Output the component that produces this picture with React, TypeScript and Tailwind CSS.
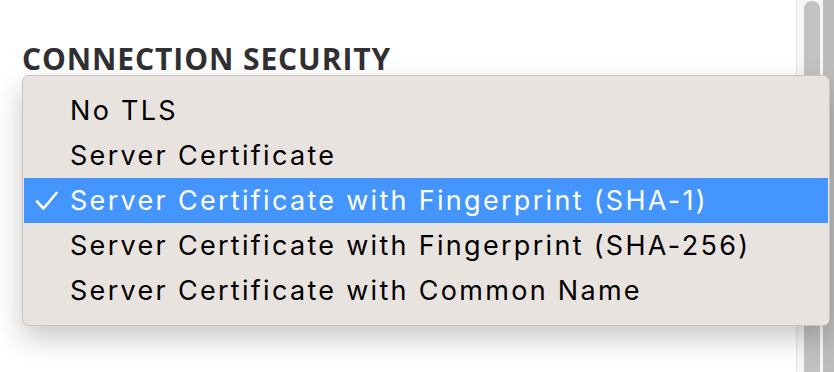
import React from "react";

const items = [
  "No TLS",
  "Server Certificate",
  "Server Certificate with Fingerprint (SHA-1)",
  "Server Certificate with Fingerprint (SHA-256)",
  "Server Certificate with Common Name",
];

export default function App() {
  return (
    <div className="relative flex h-[372px] w-[834px] overflow-hidden bg-white">
      <div className="flex-1 pl-[22px] pt-[39px]">
        <h2
          className="text-[30px] font-bold leading-[40px] tracking-[0.9px] text-[#303033]"
          style={{ fontFamily: '"Open Sans", sans-serif' }}
        >
          CONNECTION SECURITY
        </h2>
      </div>
      <div className="flex h-full w-[38px] border-l border-[#e4e4e4]">
        <div className="flex h-full w-[26px] bg-[#f6f6f6] pl-[7px] pt-[1px]">
          <div className="h-full w-[16px] rounded-t-full bg-[#c2c2c2]" />
        </div>
        <div className="h-full flex-1 bg-[#bcbcbc]" />
      </div>

      <div
        className="absolute left-[22px] top-[75px] w-[808px] rounded-[7px] border border-[#c9c4c1] bg-[#e9e3e0] px-[1px] py-[12px] shadow-[0_12px_28px_rgba(0,0,0,0.22)]"
        style={{ fontFamily: 'Inter, "Liberation Sans", Arial, sans-serif' }}
      >
        {items.map((t, i) => {
          const sel = i === 2;
          return (
            <div
              key={t}
              className={`flex h-[45px] items-center ${sel ? "bg-[#4495fe] text-white" : "text-black"}`}
            >
              <div className="flex w-[46px] pl-[11px]">
                {sel && (
                  <svg width="24" height="20" viewBox="0 0 24 20" fill="none">
                    <path d="M2 10.5 L8.5 17.5 L21.5 2" stroke="white" strokeWidth="2.6" strokeLinecap="round" strokeLinejoin="round" />
                  </svg>
                )}
              </div>
              <span className="text-[27px] leading-none tracking-[2.3px]">{t}</span>
            </div>
          );
        })}
      </div>
    </div>
  );
}
